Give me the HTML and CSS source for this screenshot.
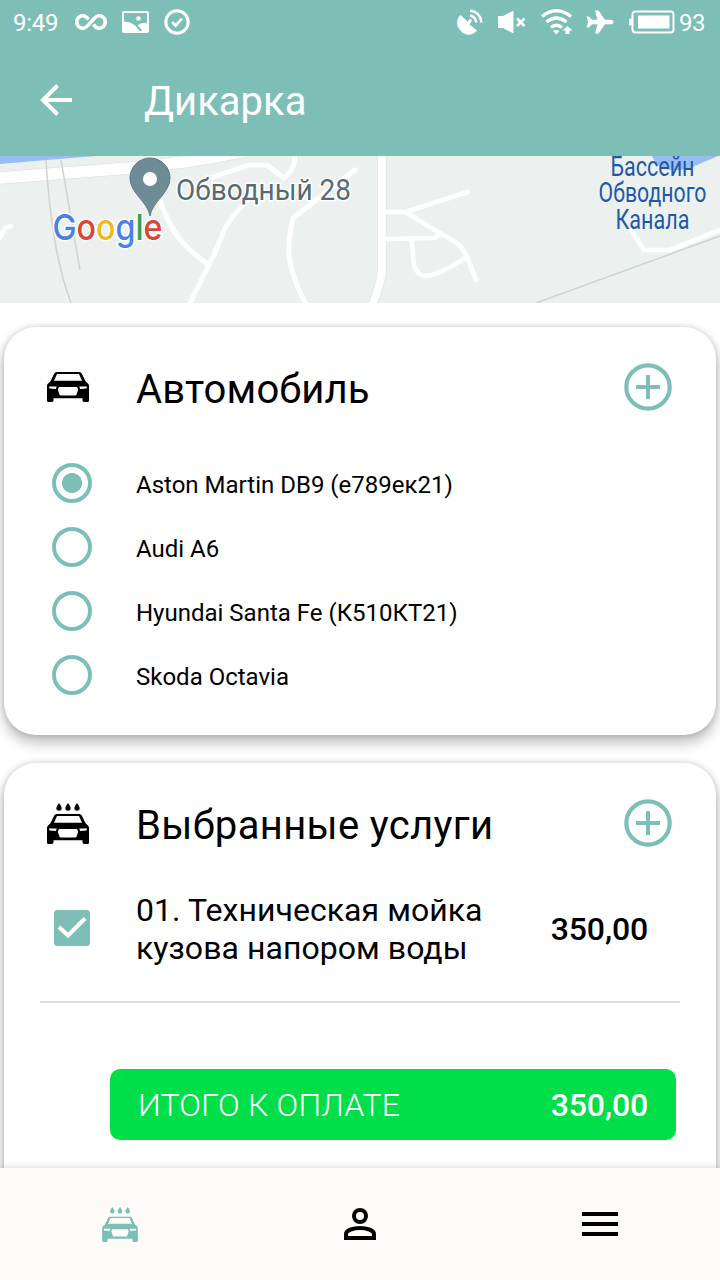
FILE: index.html
```
<!DOCTYPE html>
<html lang="ru">
<head>
<meta charset="utf-8">
<title>Дикарка</title>
<link rel="stylesheet" href="styles.css">
</head>
<body>
<svg class="sprite" aria-hidden="true">
  <symbol id="car" viewBox="0 0 42 30">
    <path fill-rule="evenodd" d="M9.5 0H32.5Q34 0 34.7 1.5L38.7 9.5L41 11.5Q42 12.5 42 14V28.5Q42 30 40.5 30H37.5Q35.8 30 35.5 28.5V26.3H6.500V28.500Q6.200 30 4.500 30H1.500Q0 30 0 28.500V14Q0 12.500 1 11.500L3.300 9.500L7.300 1.500Q8 0 9.500 0ZM10 2L7 8.700H35L32 2ZM2 14.500L2.500 16.500L8.800 17L9.800 14.500ZM40 14.500L39.500 16.500L33.200 17L32.200 14.500ZM12 15L10.800 17.500L12.500 22.700Q12.800 23.500 14 23.500H28Q29.200 23.500 29.500 22.700L31.200 17.500L30 15Z"/>
  </symbol>
  <symbol id="wash" viewBox="0 0 42 41">
    <path d="M12 0Q14.700 3.500 14.700 5A2.700 2.700 0 0 1 9.300 5Q9.300 3.500 12 0ZM21 0Q23.700 3.500 23.700 5A2.700 2.700 0 0 1 18.300 5Q18.300 3.500 21 0ZM30 0Q32.700 3.500 32.700 5A2.700 2.700 0 0 1 27.300 5Q27.300 3.500 30 0Z"/>
    <use href="#car" y="11" width="42" height="30"/>
  </symbol>
  <symbol id="plus" viewBox="0 0 48 48">
    <circle cx="24" cy="24" r="21.700" fill="none" stroke="currentColor" stroke-width="4.200"/>
    <path d="M22 12h4v10h10v4H26v10h-4V26H12v-4h10z" fill="currentColor"/>
  </symbol>
</svg>

<header class="top">
  <div class="status">
    <span class="clock">9:49</span>
    <svg class="st-inf" viewBox="0 0 34 20" fill="none" stroke="#fff" stroke-width="3.600"><path d="M14.500 7.500C12.500 4.500 11 3.700 9 3.700A6.300 6.300 0 0 0 9 16.300C15 16.300 19 3.700 25 3.700A6.300 6.300 0 0 1 25 16.300C23 16.300 21.500 15.500 19.500 12.500"/></svg>
    <svg class="st-img" viewBox="0 0 27 22"><rect x="1" y="1" width="25" height="20" rx="1" fill="none" stroke="#fff" stroke-width="2"/><circle cx="16.500" cy="7.500" r="2.300" fill="#fff"/><path d="M1 11C5 10 9 11 13 14.500L18.500 21H1ZM15.500 14.500Q20 10.500 25.500 12.500V21H20.500Q19.500 17.500 15.500 14.500Z" fill="#fff"/></svg>
    <svg class="st-ok" viewBox="0 0 26 26" fill="none" stroke="#fff"><circle cx="13" cy="13" r="11.200" stroke-width="3"/><path d="M8 13l3.700 3.500L18 9.700" stroke-width="2.700"/></svg>
    <span class="grow"></span>
    <svg class="st-sat" viewBox="0 0 26 26" fill="none" stroke="#fff" stroke-width="2.500"><path d="M3.500 6A10.400 10.400 0 0 0 3 21A10.400 10.400 0 0 0 20 21.500L12.500 15.500L15 11.500A2 2 0 0 0 12 10.500L10.800 12.800Z" fill="#fff" stroke="none"/><path d="M13 6.500Q18.500 7.500 19.300 13.500M13 1.500Q23.500 3 24.500 13.500"/></svg>
    <svg class="st-mute" viewBox="0 0 28 24"><path d="M0 6H5L15.500 .5V23.500L5 18H0Z" fill="#fff"/><path d="M19 8.500l7.500 7.500M26.500 8.500L19 16" stroke="#fff" stroke-width="2.600"/></svg>
    <svg class="st-wifi" viewBox="0 0 32 26" fill="none" stroke="#fff" stroke-width="3.300"><path d="M1 7.500Q15.500-4 30 7.500M5.500 13Q15.500 5 25.500 13M10 18.500Q15.500 14 21 18.500"/><path d="M12 22Q15.500 20 18.500 22L15.500 25.500Z" fill="#fff" stroke="none"/><path d="M26.500 17L31.500 21.500H28.500V25H24.500V21.500H21.500Z" fill="#fff" stroke="none"/></svg>
    <svg class="st-plane" viewBox="0 0 28 24"><path d="M27.500 12Q27.500 14.300 24 14.300H19L12.500 23.500H9L11.500 14.300H6L3 17.500H0.500L2 12L0.500 6.500H3L6 9.700H11.500L9 .5H12.500L19 9.700H24Q27.500 9.700 27.500 12Z" fill="#fff"/></svg>
    <svg class="st-bat" viewBox="0 0 46 24"><rect x="3.500" y="1.500" width="41" height="21" rx="3" fill="none" stroke="#fff" stroke-width="2"/><rect x="0" y="8.500" width="3" height="7" rx="1" fill="#fff"/><rect x="9" y="5.500" width="31.500" height="13" fill="#fff"/></svg>
    <span class="pct">93</span>
  </div>
  <div class="appbar">
    <svg class="back" viewBox="0 0 32 32" fill="none" stroke="#fff" stroke-width="4"><path d="M32 16H4M17.500 1.500L3 16L17.500 30.500"/></svg>
    <h1 class="title">Дикарка</h1>
  </div>
</header>

<main class="content">
  <svg class="map" viewBox="0 0 720 147">
    <rect width="720" height="147" fill="#ecf1ef"/>
    <path d="M0 0H96L46 4L0 8ZM652 0H718L690 12Q660 20 652 0Z" fill="#98bdf5"/>
    <g fill="none" stroke="#dfe3e2" stroke-linejoin="round">
      <path stroke-width="13" d="M0 22L130 12Q190 7 240-4"/>
      <path stroke-width="9.500" d="M382-2V114Q382 122 373 148"/>
    </g>
    <g fill="none" stroke="#fff" stroke-linejoin="round" stroke-linecap="round" stroke-width="5">
      <path d="M0 22L130 12Q190 7 240-4" stroke-width="11.500"/>
      <path d="M382-2V114Q382 122 373 148" stroke-width="8"/>
      <path d="M160 45C161 50 163 53 165 57C173 77 184 92 209 109M190 147L213 101L226 70Q238 52 256 36M210 22L249 9H267L284 22Q297 12 294-2M355 14L293 62C287 88 284 108 307 150"/>
      <path d="M386 56H405L468 36M405 56L455 86Q463 91 467 101L476 124M386 83L434 82L440 79M411 84C416 98 408 112 423 120Q436 121 467 101M0 82L5 72L11 70M631 74L644 94H670L720 74" stroke-width="4.600"/>
    </g>
    <path d="M46 4C50 70 58 112 71 147M61 4L80 114M536 147L720 80" fill="none" stroke="#cfd4d3" stroke-width="1.500"/>
    <path d="M150 60C148 46 130 37 130 22A20 20 0 0 1 170 22C170 37 152 46 150 60Z" fill="#6f8c96" stroke="#607b84"/>
    <circle cx="150" cy="23" r="7" fill="#fff"/>
    <text class="place" x="176" y="44" textLength="175" lengthAdjust="spacingAndGlyphs">Обводный 28</text>
    <g class="water">
      <text x="652.500" y="20" textLength="84" lengthAdjust="spacingAndGlyphs">Бассейн</text>
      <text x="652.500" y="46" textLength="108" lengthAdjust="spacingAndGlyphs">Обводного</text>
      <text x="652.500" y="73" textLength="74" lengthAdjust="spacingAndGlyphs">Канала</text>
    </g>
    <text class="google" x="52.500" y="84" textLength="110" lengthAdjust="spacingAndGlyphs"><tspan class="gb">G</tspan><tspan class="gr">o</tspan><tspan class="gy">o</tspan><tspan class="gb">g</tspan><tspan class="gg">l</tspan><tspan class="gr">e</tspan></text>
  </svg>

  <section class="card cars">
    <div class="head">
      <svg class="ico-car"><use href="#car"/></svg>
      <h2 class="h h-cars">Автомобиль</h2>
      <svg class="add"><use href="#plus"/></svg>
    </div>
    <ul class="list">
      <li class="row"><span class="radio on"></span><span class="name">Aston Martin DB9 (е789ек21)</span></li>
      <li class="row"><span class="radio"></span><span class="name">Audi A6</span></li>
      <li class="row"><span class="radio"></span><span class="name">Hyundai Santa Fe (К510КТ21)</span></li>
      <li class="row"><span class="radio"></span><span class="name">Skoda Octavia</span></li>
    </ul>
  </section>

  <section class="card services">
    <div class="head">
      <svg class="ico-wash"><use href="#wash"/></svg>
      <h2 class="h h-serv">Выбранные услуги</h2>
      <svg class="add"><use href="#plus"/></svg>
    </div>
    <div class="service">
      <svg class="check" viewBox="0 0 36 36"><rect width="36" height="36" rx="3.500" fill="#7dbfb7"/><path d="M5 17L14 25.500L31 8.500" fill="none" stroke="#fff" stroke-width="4"/></svg>
      <p class="desc">01. Техническая мойка<br>кузова напором воды</p>
      <span class="price">350,00</span>
    </div>
    <div class="total"><span class="label">ИТОГО К ОПЛАТЕ</span><span class="price">350,00</span></div>
  </section>
</main>

<nav class="nav">
  <a class="tab active"><svg class="nav-wash"><use href="#wash"/></svg></a>
  <a class="tab"><svg class="nav-user" viewBox="0 0 32 32" fill="none" stroke="#000" stroke-width="4"><circle cx="16" cy="8" r="6"/><path d="M2 30V26C2 22 10 20 16 20S30 22 30 26V30Z"/></svg></a>
  <a class="tab"><svg class="nav-menu" viewBox="0 0 36 24"><path d="M0 0H36V4H0ZM0 10H36V14H0ZM0 20H36V24H0Z"/></svg></a>
</nav>
</body>
</html>
```
FILE: styles.css
```
* { box-sizing: border-box; }
body {
  margin: 0;
  width: 720px;
  height: 1280px;
  overflow: hidden;
  display: flex;
  flex-direction: column;
  background: #fff;
  color: #000;
  font-family: Roboto, "Noto Sans", sans-serif;
}
h1, h2, p, ul { margin: 0; padding: 0; font-weight: 400; }
svg { display: block; flex: none; }
.sprite { display: none; }

.top { flex: none; height: 156px; background: #7dbfb7; color: #fff; }
.status { display: flex; align-items: center; height: 44px; padding: 0 14px 0 13px; }
.clock, .pct { font-size: 24px; line-height: 44px; padding-top: 1px; }
.clock { width: 61px; letter-spacing: -.3px; }
.pct { width: 27px; letter-spacing: -.6px; }
.grow { flex: 1; }
.st-inf { width: 34px; height: 20px; margin-right: 14px; }
.st-img { width: 27px; height: 22px; margin-right: 15px; }
.st-ok { width: 26px; height: 26px; }
.st-sat { width: 26px; height: 26px; margin-right: 15px; }
.st-mute { width: 28px; height: 24px; margin-right: 15px; }
.st-wifi { width: 32px; height: 26px; margin-right: 13px; }
.st-plane { width: 28px; height: 24px; margin-right: 15px; }
.st-bat { width: 46px; height: 24px; margin-right: 4px; }
.appbar { display: flex; align-items: center; height: 112px; padding-left: 40px; }
.back { width: 32px; height: 32px; margin-right: 72px; }
.title { font-size: 40px; line-height: 48px; padding-top: 4px; }

.content { flex: 1; min-height: 0; overflow: hidden; }
.map { width: 720px; height: 147px; }
.place { font-size: 30px; fill: #566c70; stroke: #fff; stroke-width: 3px; paint-order: stroke; }
.water { font-size: 27px; fill: #2258a8; text-anchor: middle; }
.google { font: 500 36px Inter, sans-serif; stroke: #fff; stroke-width: 3px; paint-order: stroke; }
.gb { fill: #4a80e8; }
.gr { fill: #dc4437; }
.gy { fill: #edb91c; }
.gg { fill: #34a050; }

.card {
  margin: 0 4px;
  border-radius: 32px;
  background: #fff;
  box-shadow: 0 8px 14px rgba(0,0,0,.25), 0 0 6px rgba(0,0,0,.18);
}
.cars { margin-top: 24px; height: 408px; }
.services { margin-top: 28px; height: 460px; }
.head { display: flex; align-items: center; height: 120px; padding: 0 44px 0 43px; }
.ico-car { width: 42px; height: 30px; }
.ico-wash { width: 42px; height: 41px; }
.h { flex: 1; margin-left: 47px; padding-top: 6px; font-size: 40px; line-height: 48px; }
.h-cars { letter-spacing: .15px; }
.h-serv { letter-spacing: .35px; }
.add { width: 48px; height: 48px; color: #7dbfb7; }
.list { list-style: none; padding-top: 4px; }
.row { display: flex; align-items: center; gap: 44px; height: 64px; padding-left: 48px; font-size: 24px; line-height: 32px; }
.name { padding-top: 3px; }
.radio {
  flex: none;
  width: 40px;
  height: 40px;
  border: 4px solid #7dbfb7;
  border-radius: 50%;
}
.on { background: radial-gradient(circle, #7dbfb7 9.6px, transparent 10.4px); }
.service {
  display: flex;
  align-items: center;
  height: 120px;
  margin: 0 36px;
  padding: 0 32px 0 14px;
  border-bottom: 2px solid #dcdcdc;
}
.check { width: 36px; height: 36px; margin-top: -28px; }
.desc { flex: 1; margin: -26px 0 0 46px; font-size: 32px; line-height: 38px; letter-spacing: .05px; }
.price { font-size: 32px; line-height: 38px; font-weight: 500; letter-spacing: -.15px; }
.service .price { margin-top: -26px; }
.total {
  display: flex;
  align-items: center;
  justify-content: space-between;
  width: 566px;
  height: 71px;
  margin: 66px 0 0 106px;
  padding: 0 28px;
  border-radius: 10px;
  background: #00df49;
  color: #fff;
}
.label { font-size: 32px; line-height: 38px; font-weight: 300; letter-spacing: .2px; }

.nav {
  flex: none;
  position: relative;
  display: grid;
  grid-template-columns: repeat(3, 1fr);
  place-items: center;
  height: 112px;
  background: #fdfaf7;
  box-shadow: 0 0 8px rgba(0,0,0,.18);
}
.active { fill: #7dbfb7; }
.nav-wash { width: 36px; height: 35px; }
.nav-user { width: 32px; height: 32px; }
.nav-menu { width: 36px; height: 24px; }
```
